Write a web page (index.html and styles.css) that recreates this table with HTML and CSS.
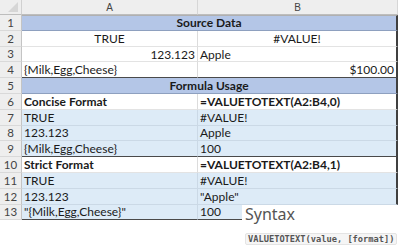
FILE: index.html
```html
<!DOCTYPE html>
<html>
<head>
<meta charset="utf-8">
<link rel="stylesheet" href="styles.css">
</head>
<body>
<div class="sheet">
  <div class="corner"><span class="tri"></span></div>
  <div class="colhead">A</div>
  <div class="colhead">B</div>

  <div class="rowhead">1</div>
  <div class="cell merged title top-line">Source Data</div>

  <div class="rowhead">2</div>
  <div class="cell center">TRUE</div>
  <div class="cell center edge">#VALUE!</div>

  <div class="rowhead">3</div>
  <div class="cell right">123.123</div>
  <div class="cell edge">Apple</div>

  <div class="rowhead">4</div>
  <div class="cell dark-bottom">{Milk,Egg,Cheese}</div>
  <div class="cell right edge dark-bottom">$100.00</div>

  <div class="rowhead">5</div>
  <div class="cell merged title">Formula Usage</div>

  <div class="rowhead">6</div>
  <div class="cell bold">Concise Format</div>
  <div class="cell bold edge">=VALUETOTEXT(A2:B4,0)</div>

  <div class="rowhead">7</div>
  <div class="cell fill">TRUE</div>
  <div class="cell fill edge">#VALUE!</div>

  <div class="rowhead">8</div>
  <div class="cell fill">123.123</div>
  <div class="cell fill edge">Apple</div>

  <div class="rowhead">9</div>
  <div class="cell fill dark-bottom">{Milk,Egg,Cheese}</div>
  <div class="cell fill edge dark-bottom">100</div>

  <div class="rowhead">10</div>
  <div class="cell bold">Strict Format</div>
  <div class="cell bold edge">=VALUETOTEXT(A2:B4,1)</div>

  <div class="rowhead">11</div>
  <div class="cell fill">TRUE</div>
  <div class="cell fill edge">#VALUE!</div>

  <div class="rowhead">12</div>
  <div class="cell fill">123.123</div>
  <div class="cell fill edge">"Apple"</div>

  <div class="rowhead">13</div>
  <div class="cell fill dark-bottom">"{Milk,Egg,Cheese}"</div>
  <div class="cell fill edge dark-bottom">100</div>
</div>

<div class="syntax">
  <div class="syntax-title">Syntax</div>
  <code class="syntax-code">VALUETOTEXT(value, [format])</code>
</div>
</body>
</html>
```

FILE: styles.css
```css
html, body {
  margin: 0;
  padding: 0;
  background: #ffffff;
}

body {
  width: 400px;
  height: 250px;
  overflow: hidden;
  position: relative;
  font-family: Lato, "Liberation Sans", sans-serif;
  font-size: 12px;
  color: #1a1a1a;
}

.sheet {
  display: grid;
  grid-template-columns: 22px 176px 200px;
  grid-template-rows: 15px repeat(13, 15.8px);
  width: 398px;
}

.corner {
  background: #eeeeee;
  border-right: 1px solid #d0d0d0;
  border-bottom: 1px solid #bdbdbd;
  box-sizing: border-box;
  position: relative;
}

.tri {
  position: absolute;
  right: 3px;
  bottom: 2px;
  width: 0;
  height: 0;
  border-left: 10px solid transparent;
  border-bottom: 10px solid #d6d6d6;
}

.colhead {
  background: #eeeeee;
  border-right: 1px solid #d6d6d6;
  border-bottom: 1px solid #bdbdbd;
  box-sizing: border-box;
  display: flex;
  align-items: center;
  justify-content: center;
  color: #444444;
  font-family: "Liberation Sans", sans-serif;
  font-size: 10px;
}

.rowhead {
  background: #eeeeee;
  border-right: 1px solid #c4c4c4;
  border-bottom: 1px solid #d9d9d9;
  box-sizing: border-box;
  display: flex;
  align-items: center;
  justify-content: center;
  color: #444444;
  font-size: 11.5px;
}

.cell {
  box-sizing: border-box;
  border-right: 1px solid #dcdcdc;
  border-bottom: 1px solid #e3e3e3;
  display: flex;
  align-items: center;
  padding: 0 2px;
  white-space: nowrap;
  overflow: hidden;
  background: #ffffff;
}

.merged {
  grid-column: span 2;
}

.title {
  background: #b4c6e7;
  justify-content: center;
  font-weight: bold;
  border-bottom: 1px solid #8ea0bf;
  border-right: 2px solid #404040;
}

.top-line {
  border-top: 1px solid #b0b0b0;
}

.bold {
  font-weight: bold;
}

.center {
  justify-content: center;
}

.right {
  justify-content: flex-end;
}

.fill {
  background: #ddebf7;
  border-bottom-color: #cbd9e6;
  border-right-color: #cbd9e6;
}

.edge {
  border-right: 2px solid #404040;
}

.dark-bottom {
  border-bottom: 1px solid #4a4a4a;
}

.syntax {
  position: absolute;
  left: 242px;
  top: 205px;
  width: 158px;
  height: 45px;
  background: #ffffff;
  box-sizing: border-box;
  padding: 0 0 0 3px;
}

.syntax-title {
  font-family: "Noto Sans", sans-serif;
  font-size: 16px;
  line-height: 20px;
  color: #555555;
  margin-top: -1px;
}

.syntax-code {
  display: inline-block;
  margin-top: 9px;
  font-family: "DejaVu Sans Mono", monospace;
  font-size: 8.7px;
  font-weight: bold;
  line-height: 10px;
  color: #555555;
  background: #f5f5f5;
  border: 1px solid #e4e4e4;
  border-radius: 2px;
  padding: 0 2px;
}
```
